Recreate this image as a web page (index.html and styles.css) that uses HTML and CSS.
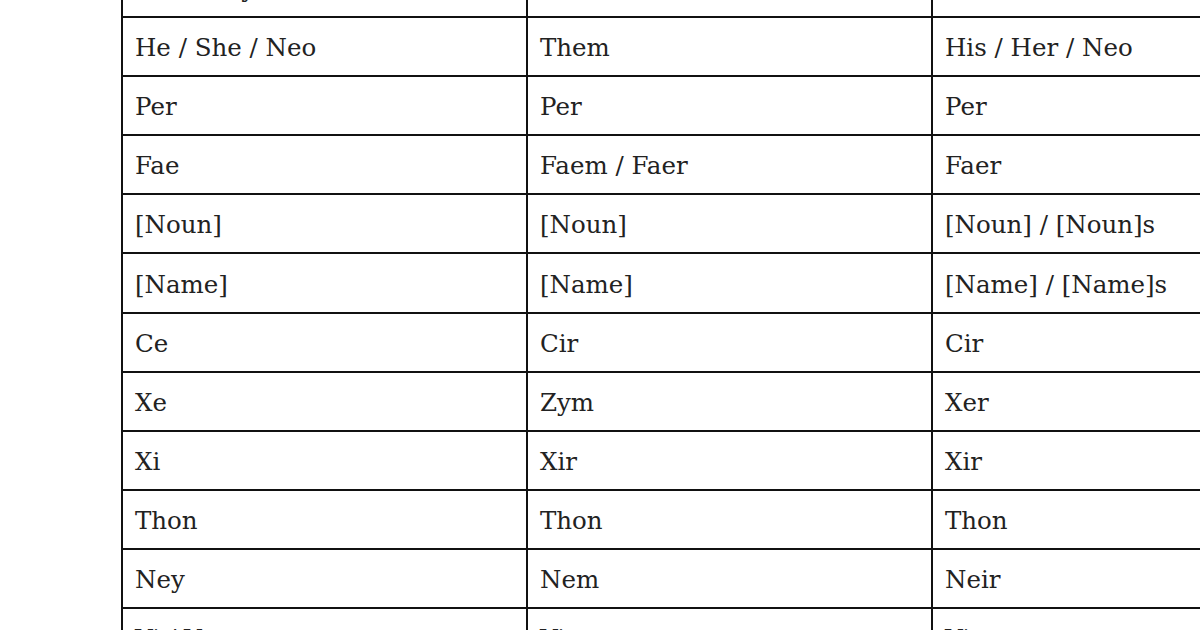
FILE: index.html
```html
<!DOCTYPE html>
<html lang="en">
<head>
<meta charset="utf-8">
<title>Pronouns</title>
<link rel="stylesheet" href="styles.css">
</head>
<body>
<div class="page">
  <table class="pronouns">
    <tbody>
      <tr><td>He / They</td><td>Him / Them</td><td>His / Their</td></tr>
      <tr><td>He / She / Neo</td><td>Them</td><td>His / Her / Neo</td></tr>
      <tr><td>Per</td><td>Per</td><td>Per</td></tr>
      <tr><td>Fae</td><td>Faem / Faer</td><td>Faer</td></tr>
      <tr><td>[Noun]</td><td>[Noun]</td><td>[Noun] / [Noun]s</td></tr>
      <tr><td>[Name]</td><td>[Name]</td><td>[Name] / [Name]s</td></tr>
      <tr><td>Ce</td><td>Cir</td><td>Cir</td></tr>
      <tr><td>Xe</td><td>Zym</td><td>Xer</td></tr>
      <tr><td>Xi</td><td>Xir</td><td>Xir</td></tr>
      <tr><td>Thon</td><td>Thon</td><td>Thon</td></tr>
      <tr><td>Ney</td><td>Nem</td><td>Neir</td></tr>
      <tr><td>Vi / Ve</td><td>Vir</td><td>Vis</td></tr>
    </tbody>
  </table>
</div>
</body>
</html>
```

FILE: styles.css
```css
html, body {
  margin: 0;
  padding: 0;
  background: #ffffff;
}

body {
  width: 1200px;
  height: 630px;
  overflow: hidden;
}

.page {
  padding-left: 121px;
}

.pronouns {
  border-collapse: collapse;
  margin-top: -43px;
  table-layout: fixed;
  width: 1217px;
  font-family: "DejaVu Serif", "Liberation Serif", serif;
  font-size: 24.5px;
  color: #222222;
}

.pronouns td {
  border: 2px solid #111111;
  width: 405px;
  height: 59.1px;
  padding: 2px 12px 0;
  vertical-align: middle;
  white-space: nowrap;
  box-sizing: border-box;
}
```
